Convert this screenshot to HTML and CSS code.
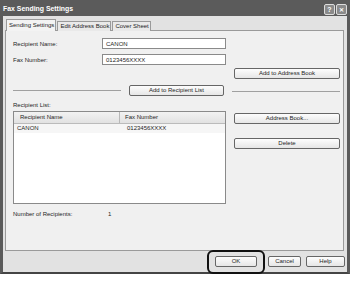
FILE: index.html
```html
<!DOCTYPE html>
<html lang="en">
  <head>
    <meta charset="UTF-8">
    <title>Fax Sending Settings</title>
    <link rel="stylesheet" href="styles.css">
  </head>
  <body>
    <div class="window">
      <div class="titlebar">
        <span class="title">Fax Sending Settings</span>
        <span class="tbtn">?</span>
        <span class="tbtn close">&#x2715;</span>
      </div>
      <div class="tabs">
        <span class="tab active">Sending Settings</span>
        <span class="tab">Edit Address Book</span>
        <span class="tab">Cover Sheet</span>
      </div>
      <div class="panel">
        <div class="field">
          <label>Recipient Name:</label>
          <span class="input">CANON</span>
        </div>
        <div class="field">
          <label>Fax Number:</label>
          <span class="input">0123456XXXX</span>
        </div>
        <div class="row-right">
          <span class="btn wide">Add to Address Book</span>
        </div>
        <div class="sep-row">
          <span class="line"></span>
          <span class="btn mid">Add to Recipient List</span>
          <span class="line right"></span>
        </div>
        <div class="caption">Recipient List:</div>
        <div class="list-row">
          <div class="list">
            <div class="list-head">
              <span class="col1">Recipient Name</span>
              <span class="col2">Fax Number</span>
            </div>
            <div class="list-item">
              <span class="col1">CANON</span>
              <span class="col2">0123456XXXX</span>
            </div>
          </div>
          <div class="side">
            <span class="btn wide">Address Book...</span>
            <span class="btn wide">Delete</span>
          </div>
        </div>
        <div class="count">
          <span class="count-label">Number of Recipients:</span>
          <span>1</span>
        </div>
      </div>
      <div class="footer">
        <span class="btn ok">OK</span>
        <span class="btn cancel">Cancel</span>
        <span class="btn help">Help</span>
      </div>
    </div>
  </body>
</html>
```

FILE: styles.css
```css
body {
  margin: 0;
  background: #fff;
  font-family: "Liberation Sans", Arial, sans-serif;
  font-size: 6px;
  color: #1e1e1e;
}
.window {
  width: 350px;
  height: 274px;
  box-sizing: border-box;
  background: #e2e2e2;
  border-left: 3px solid #5a5a5a;
  border-right: 3px solid #5a5a5a;
  border-bottom: 2px solid #444;
}
.titlebar {
  height: 16px;
  margin: 0 -3px;
  padding: 0 3px;
  background: #5b5b5b;
  display: flex;
  align-items: center;
}
.title {
  flex: 1;
  color: #fff;
  font-weight: bold;
  font-size: 6.9px;
  padding-left: 0;
}
.tbtn {
  width: 11px;
  height: 11px;
  box-sizing: border-box;
  margin-left: 1px;
  margin-top: 2px;
  border: 1px solid #ddd;
  border-radius: 2px;
  background: #8a8a8a;
  color: #fff;
  font-weight: bold;
  font-size: 7px;
  display: flex;
  align-items: center;
  justify-content: center;
}
.tbtn.close {
  font-size: 6px;
}
.tabs {
  display: flex;
  align-items: flex-end;
  height: 14px;
  padding-left: 3px;
}
.tab {
  height: 9px;
  line-height: 9px;
  padding: 0 1px 0 2px;
  margin-right: 1px;
  border: 1px solid #9a9a9a;
  border-bottom: none;
  background: #e9e9e9;
  position: relative;
  top: 1px;
}
.tab.active {
  height: 11px;
  line-height: 11px;
  background: #f3f3f3;
  z-index: 1;
}
.panel {
  height: 221px;
  margin: 0 3px 0 2px;
  box-sizing: border-box;
  padding: 7px 3px 0 7px;
  background: #f0f0f0;
  border: 1px solid #9a9a9a;
}
.field {
  display: flex;
  align-items: center;
  height: 11px;
  margin-bottom: 5px;
}
.field label {
  width: 89px;
}
.input {
  width: 124px;
  height: 11px;
  line-height: 10px;
  box-sizing: border-box;
  padding-left: 3px;
  background: #fff;
  border: 1px solid #8a8a8a;
}
.row-right {
  display: flex;
  justify-content: flex-end;
  margin-top: -2px;
}
.btn {
  height: 11px;
  line-height: 9px;
  box-sizing: border-box;
  text-align: center;
  border: 1px solid #666;
  border-radius: 2px;
  background: linear-gradient(#fdfdfd, #e6e6e6);
}
.wide {
  width: 106px;
  display: block;
}
.sep-row {
  display: flex;
  align-items: center;
  margin-top: 6px;
}
.line {
  flex: 1;
  height: 0;
  border-top: 1px solid #a0a0a0;
  margin-right: 8px;
}
.line.right {
  margin: 2px 0 0 8px;
}
.mid {
  width: 95px;
}
.caption {
  margin-top: 5px;
  height: 8px;
  line-height: 8px;
}
.list-row {
  display: flex;
  justify-content: space-between;
  margin-top: 2px;
}
.list {
  width: 213px;
  height: 93px;
  box-sizing: border-box;
  background: #fff;
  border: 1px solid #8a8a8a;
}
.list-head {
  display: flex;
  height: 11px;
  line-height: 11px;
  background: linear-gradient(#f2f2f2, #e2e2e2);
  border-bottom: 1px solid #bbb;
}
.list-item {
  display: flex;
  height: 9px;
  line-height: 9px;
  background: #f6f6f6;
}
.col1 {
  box-sizing: border-box;
}
.list-head .col1 {
  padding-left: 6px;
  border-right: 1px solid #b8b8b8;
  width: 106px;
}
.list-item .col1 {
  width: 108px;
  padding-left: 3px;
}
.col2 {
  padding-left: 5px;
}
.side {
  display: flex;
  flex-direction: column;
  gap: 14px;
  margin-top: 2px;
}
.count {
  display: flex;
  margin-top: 7px;
}
.count-label {
  width: 95px;
}
.footer {
  display: flex;
  justify-content: flex-end;
  padding: 5px 2px 0 0;
}
.ok {
  width: 42px;
  position: relative;
  margin-right: 11px;
}
.ok::after {
  content: "";
  position: absolute;
  left: -9px;
  right: -9px;
  top: -7px;
  bottom: -8px;
  border: 2px solid #111;
  border-radius: 6px;
}
.cancel {
  width: 33px;
  margin-right: 5px;
}
.help {
  width: 39px;
}
```
